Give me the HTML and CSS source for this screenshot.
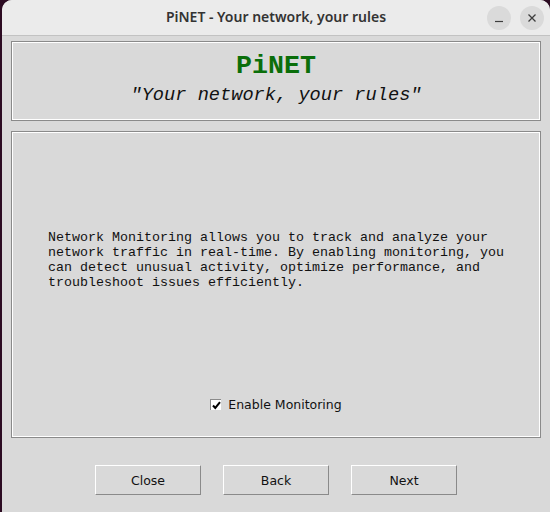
FILE: index.html
```html
<!DOCTYPE html>
<html lang="en">
<head>
  <meta charset="UTF-8" />
  <meta name="viewport" content="width=device-width, initial-scale=1.0"/>
  <title>PiNET - Your network, your rules</title>
  <link rel="stylesheet" href="styles.css">
</head>
<body>
  <div class="window">
    <!-- Title bar -->
    <div class="titlebar">
      <div></div>
      <div class="title">PiNET - Your network, your rules</div>
      <div class="win-controls">
        <span class="win-btn">
          <svg width="10" height="10" viewBox="0 0 10 10"><path d="M1 8.5h8" stroke="#3d3d3d" stroke-width="1.2"/></svg>
        </span>
        <span class="win-btn">
          <svg width="10" height="10" viewBox="0 0 10 10"><path d="M1.5 1.5l7 7M8.5 1.5l-7 7" stroke="#3d3d3d" stroke-width="1.3"/></svg>
        </span>
      </div>
    </div>

    <div class="content">
      <!-- Header -->
      <div class="frame header">
        <div class="brand">PiNET</div>
        <div class="slogan">"Your network, your rules"</div>
      </div>

      <!-- Monitoring panel -->
      <div class="frame panel">
        <div class="desc">Network Monitoring allows you to track and analyze your
network traffic in real-time. By enabling monitoring, you
can detect unusual activity, optimize performance, and
troubleshoot issues efficiently.</div>
        <label class="check-row">
          <span class="checkbox">
            <svg width="9" height="9" viewBox="0 0 9 9"><path d="M1 4.5l2.3 2.5L8 1.2" fill="none" stroke="#000" stroke-width="2"/></svg>
          </span>
          Enable Monitoring
        </label>
      </div>

      <!-- Navigation -->
      <div class="nav">
        <button class="btn">Close</button>
        <button class="btn">Back</button>
        <button class="btn">Next</button>
      </div>
    </div>
  </div>
</body>
</html>
```

FILE: styles.css
```css
* {
  box-sizing: border-box;
}

body {
  margin: 0;
  background: #2c0b22;
  width: 550px;
  height: 512px;
  overflow: hidden;
}

.window {
  margin-left: 2px;
  width: 548px;
  height: 512px;
  background: #d9d9d9;
  border-radius: 10px 10px 0 0;
  overflow: hidden;
}

.titlebar {
  height: 36px;
  background: #ebebeb;
  border-bottom: 1px solid #c2c2c2;
  display: grid;
  grid-template-columns: 1fr auto 1fr;
  align-items: center;
}

.title {
  font-family: "Noto Sans", sans-serif;
  font-weight: 600;
  font-size: 14px;
  color: #333;
  padding-bottom: 2px;
}

.win-controls {
  display: flex;
  justify-content: flex-end;
  gap: 9px;
  padding-right: 6px;
}

.win-btn {
  width: 24px;
  height: 24px;
  border-radius: 50%;
  background: #dadada;
  display: flex;
  align-items: center;
  justify-content: center;
}

.content {
  padding: 5px 9px 0 9px;
}

.frame {
  border: 1px solid #8a8a8a;
  box-shadow: inset 0 0 0 1px #fff;
}

.header {
  height: 80px;
  text-align: center;
  font-family: "Liberation Mono", monospace;
  padding-top: 9px;
}

.brand {
  font-size: 26.67px;
  font-weight: bold;
  color: #0a6e0a;
  line-height: 30px;
}

.slogan {
  font-size: 18.67px;
  font-style: italic;
  color: #111;
  line-height: 28px;
}

.panel {
  margin-top: 10px;
  height: 307px;
  display: flex;
  flex-direction: column;
  align-items: center;
}

.desc {
  margin-top: 98px;
  font-family: "Liberation Mono", monospace;
  font-size: 13.33px;
  line-height: 15px;
  color: #111;
  white-space: pre;
  text-align: left;
}

.check-row {
  margin-top: auto;
  margin-bottom: 25px;
  display: flex;
  align-items: center;
  gap: 7px;
  font-family: "DejaVu Sans", sans-serif;
  font-size: 12.5px;
  color: #111;
}

.checkbox {
  width: 11px;
  height: 11px;
  background: #fff;
  border-top: 1px solid #8a8a8a;
  border-left: 1px solid #8a8a8a;
  display: flex;
  align-items: center;
  justify-content: center;
}

.nav {
  display: flex;
  justify-content: center;
  gap: 22px;
  margin-top: 27px;
}

.btn {
  width: 106px;
  height: 30px;
  background: #d9d9d9;
  border: 1px solid;
  border-color: #fff #8a8a8a #8a8a8a #fff;
  font-family: "DejaVu Sans", sans-serif;
  font-size: 12.5px;
  color: #111;
  padding: 0;
}
```
